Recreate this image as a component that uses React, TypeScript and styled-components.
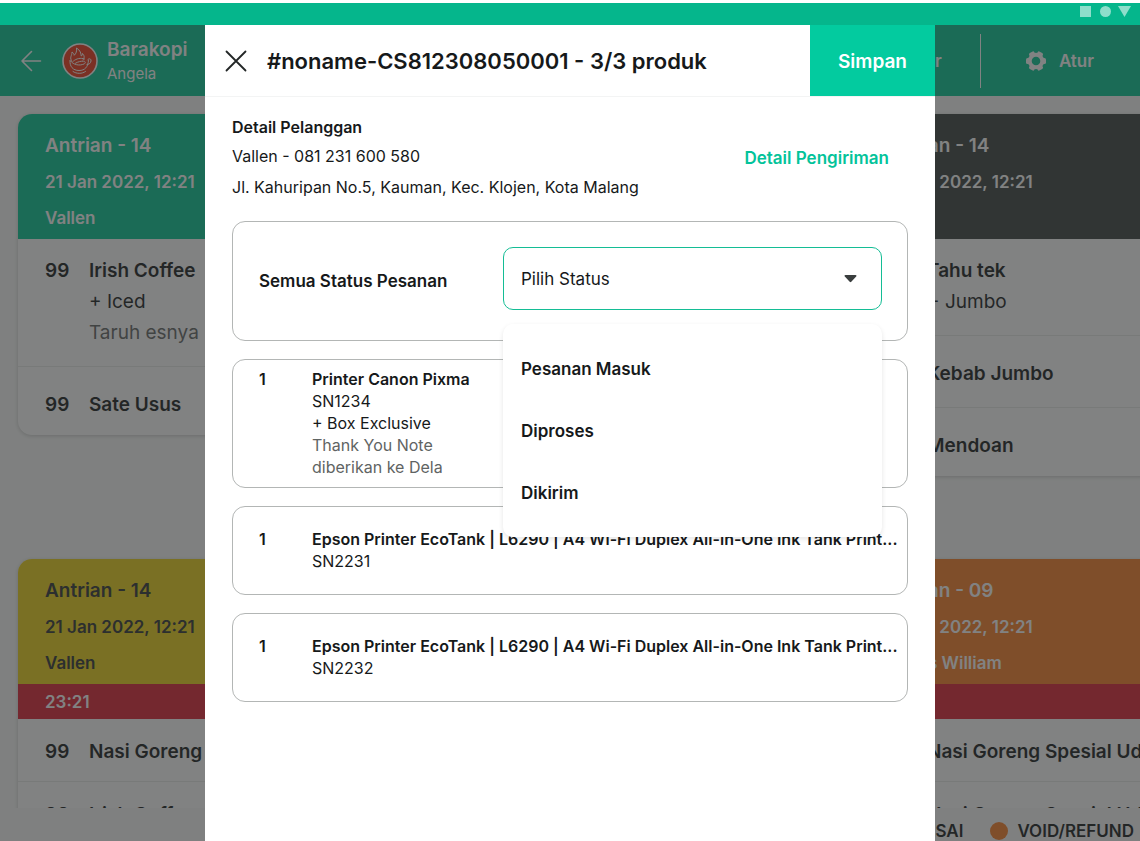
import React from "react";
import styled, { createGlobalStyle } from "styled-components";

const GlobalStyle = createGlobalStyle`
  *, *::before, *::after { box-sizing: border-box; }
  body {
    margin: 0;
    background: #ffffff;
    font-family: Inter, "Liberation Sans", sans-serif;
    color: #16191a;
  }
  button, select { font: inherit; color: inherit; }
  h1, h2, p, ul { margin: 0; padding: 0; }
  ul { list-style: none; }
`;

const Screen = styled.div`
  display: flex;
  flex-direction: column;
  height: 100vh;
  overflow: hidden;
`;

const StatusBar = styled.div`
  flex: none;
  display: flex;
  justify-content: flex-end;
  height: 25px;
  padding: 3px 9px 0 0;
  border-top: 3px solid #ffffff;
  background: #05b68c;
`;

const Workspace = styled.div`
  position: relative;
  flex: 1;
  min-height: 0;
  display: flex;
  flex-direction: column;
  background: #fafbfa;
`;

const TopBar = styled.header`
  flex: none;
  display: flex;
  align-items: center;
  height: 71px;
  padding: 0 46px 0 20px;
  background: #00c592;
  color: #ffffff;
`;

const IconButton = styled.button`
  display: flex;
  padding: 0;
  border: 0;
  background: none;
  cursor: pointer;
`;

const Brand = styled.div`
  display: flex;
  align-items: center;
  gap: 9px;
  margin-left: 20px;
`;

const BrandName = styled.p`
  font-size: 19px;
  line-height: 26px;
  font-weight: 600;
`;

const BrandUser = styled.p`
  font-size: 15px;
  line-height: 22px;
`;

const TopActions = styled.div`
  display: flex;
  align-items: center;
  margin-left: auto;
`;

const TopAction = styled.button`
  display: flex;
  align-items: center;
  gap: 12px;
  padding: 0;
  border: 0;
  background: none;
  font-size: 17px;
  line-height: 24px;
  font-weight: 600;
  cursor: pointer;
`;

const Divider = styled.span`
  width: 1px;
  height: 54px;
  margin: 0 44px 0 38px;
  background: #ffffff;
`;

const Board = styled.main`
  flex: 1;
  min-height: 0;
  display: grid;
  grid-template-columns: repeat(3, 401px);
  grid-auto-rows: 427px;
  gap: 18px;
  align-items: start;
  padding: 18px 18px 0;
  overflow: hidden;
`;

const Ticket = styled.article<{ $column: number; $row: number }>`
  grid-column: ${(p) => p.$column};
  grid-row: ${(p) => p.$row};
  border-radius: 14px;
  overflow: hidden;
  background: #ffffff;
  box-shadow: 0 1px 4px rgba(0, 0, 0, 0.2);
`;

const TicketHead = styled.div<{ $bg: string; $fg: string }>`
  min-height: 125px;
  padding: 14px 27px 0;
  background: ${(p) => p.$bg};
  color: ${(p) => p.$fg};
  font-size: 17px;
  line-height: 36px;
  font-weight: 600;
`;

const TicketTitle = styled.h2`
  font-size: 19px;
  line-height: 36px;
  font-weight: 600;
`;

const Timer = styled.div`
  height: 35px;
  padding: 0 27px;
  background: #de1e30;
  color: #ffffff;
  font-size: 17px;
  line-height: 36px;
  font-weight: 600;
`;

const OrderList = styled.ul<{ $dense?: boolean }>`
  padding: ${(p) => (p.$dense ? "0" : "0 0 15px")};

  li {
    padding: ${(p) => (p.$dense ? "17px 27px 14px" : "16px 27px 18px")};
  }
  li + li {
    padding-top: ${(p) => (p.$dense ? "17px" : "22px")};
    border-top: 1px solid #e8eae9;
  }
  li:last-child {
    padding-bottom: 0;
  }
`;

const OrderItem = styled.li`
  display: grid;
  grid-template-columns: 44px 1fr;
  font-size: 19px;
  line-height: 31px;
  white-space: nowrap;
`;

const Strong = styled.p`
  font-weight: 600;
`;

const Muted = styled.p`
  color: #5f6463;
`;

const Legend = styled.footer`
  flex: none;
  display: flex;
  justify-content: flex-end;
  gap: 27px;
  padding: 13px 6px 0 0;
  font-size: 17px;
  line-height: 20px;
  font-weight: 600;
`;

const LegendItem = styled.span<{ $color: string }>`
  display: flex;
  align-items: center;
  gap: 9px;

  &::before {
    content: "";
    width: 18px;
    height: 18px;
    border-radius: 50%;
    background: ${(p) => p.$color};
  }
`;

const Scrim = styled.div`
  position: absolute;
  inset: 0;
  display: flex;
  justify-content: center;
  background: rgba(45, 47, 46, 0.6);
`;

const Dialog = styled.section`
  width: 730px;
  max-width: 100%;
  background: #ffffff;
`;

const DialogHead = styled.div`
  display: flex;
  align-items: center;
  gap: 20px;
  height: 71px;
  padding-left: 20px;
  box-shadow: 0 1px 0 #f3f4f4;
`;

const DialogTitle = styled.h1`
  flex: 1;
  font-size: 22px;
  line-height: 30px;
  font-weight: 600;
`;

const SaveButton = styled.button`
  align-self: stretch;
  width: 125px;
  padding: 1px 0 0;
  border: 0;
  background: #03cb9f;
  color: #ffffff;
  font-size: 19px;
  font-weight: 600;
  cursor: pointer;
`;

const DialogBody = styled.div`
  display: flex;
  flex-direction: column;
  gap: 18px;
  padding: 17px 27px;
`;

const Customer = styled.div`
  display: flex;
  align-items: center;
  justify-content: space-between;
  padding-right: 19px;
  font-size: 16px;
  line-height: 31px;
`;

const CustomerHeading = styled.h2`
  font-size: 16px;
  line-height: 28px;
  font-weight: 600;
`;

const ShippingButton = styled.button`
  padding: 0;
  border: 0;
  background: none;
  color: #03c39a;
  font-size: 17px;
  line-height: 24px;
  font-weight: 600;
  cursor: pointer;
`;

const Panel = styled.div`
  display: flex;
  border: 1px solid #b3b6b5;
  border-radius: 13px;
`;

const StatusPanel = styled(Panel)`
  align-items: flex-start;
  justify-content: space-between;
  height: 120px;
  padding: 25px 25px 0 26px;
`;

const StatusLabel = styled.label`
  font-size: 17px;
  line-height: 68px;
  font-weight: 600;
`;

const SelectWrap = styled.div`
  position: relative;
  width: 379px;
`;

const StatusSelect = styled.select`
  display: block;
  width: 100%;
  height: 63px;
  padding: 0 17px;
  border: 1px solid #14bd95;
  border-radius: 10px;
  background: #ffffff;
  appearance: none;
  font-size: 17px;
  outline: none;
`;

const Caret = styled.svg`
  position: absolute;
  top: 28px;
  right: 25px;
  pointer-events: none;
`;

const Menu = styled.ul`
  position: absolute;
  z-index: 1;
  top: calc(100% + 14px);
  left: 0;
  right: 0;
  padding: 13px 0 14px;
  border-radius: 10px;
  background: #ffffff;
  box-shadow: 0 2px 5px rgba(0, 0, 0, 0.1);
`;

const MenuOption = styled.button`
  display: block;
  width: 100%;
  height: 62px;
  padding: 1px 18px 0;
  border: 0;
  background: none;
  text-align: left;
  font-size: 17px;
  font-weight: 600;
  cursor: pointer;
`;

const Product = styled(Panel)`
  align-items: center;
  min-height: 89px;
  padding: 8px 8px 9px 26px;
  font-size: 16px;
  line-height: 22px;
`;

const ProductQty = styled.p`
  flex: none;
  width: 53px;
  font-weight: 600;
`;

const ProductRow = styled.div`
  display: flex;
  min-width: 0;
  flex: 1;
`;

const ProductInfo = styled.div`
  min-width: 0;
`;

const ProductName = styled.h2`
  overflow: hidden;
  text-overflow: ellipsis;
  white-space: nowrap;
  font-size: 16px;
  line-height: 22px;
  font-weight: 600;
`;

const Note = styled(Muted)`
  max-width: 150px;
`;

type Line = { qty: string; name: string; extra?: string; note?: string };

const Lines = ({ items, dense }: { items: Line[]; dense?: boolean }) => (
  <OrderList $dense={dense}>
    {items.map((item, index) => (
      <OrderItem key={index}>
        <Strong>{item.qty}</Strong>
        <div>
          <Strong>{item.name}</Strong>
          {item.extra && <p>{item.extra}</p>}
          {item.note && <Muted>{item.note}</Muted>}
        </div>
      </OrderItem>
    ))}
  </OrderList>
);

const products = [
  { name: "Printer Canon Pixma", serial: "SN1234", extra: "+ Box Exclusive", note: "Thank You Note diberikan ke Dela" },
  { name: "Epson Printer EcoTank | L6290 | A4 Wi-Fi Duplex All-in-One Ink Tank Print...", serial: "SN2231" },
  { name: "Epson Printer EcoTank | L6290 | A4 Wi-Fi Duplex All-in-One Ink Tank Print...", serial: "SN2232" },
];

const statuses = ["Pesanan Masuk", "Diproses", "Dikirim"];

const Logo = () => (
  <svg width="36" height="36" viewBox="0 0 36 36" fill="none" aria-hidden="true">
    <circle cx="18" cy="18" r="17" fill="#f03414" stroke="#ffffff" strokeWidth="1.6" />
    <g stroke="#ffffff" strokeWidth="1" strokeLinecap="round" strokeLinejoin="round">
      <path d="M10 18.500c-3-4 0-5.500 0-9.500 1.500 1 2 2 2.200 3.300 2-1.800 2.800-4.300 2.300-7.300 4 2.500 4.500 5.500 4.700 8 1-.3 1.300-1.500 1.300-2.500 2.300 2.500 2 4.500.5 6.500" />
      <path d="M8 17.500c-.5 6 3 10 9 10s9-3.500 9.500-10" />
      <path d="M8.500 18c3 4 9 5 13.500 3 2-1 1.500-2.800-.5-2.800-3 0-5 .3-8 2" />
      <path d="M11.500 18c3-2.500 7-3.500 11-2" />
      <path d="M25.500 17c1-2 4-1.500 3.500 1s-2 3.500-4 3.500" />
      <path d="M11 28.500c3.500 2.500 9 2.500 12.500 0" />
    </g>
  </svg>
);

const Gear = () => (
  <svg width="22" height="22" viewBox="0 0 22 22" fill="none" aria-hidden="true">
    <circle cx="11" cy="11" r="6.300" stroke="#ffffff" strokeWidth="4" />
    <g fill="#ffffff">
      {[30, 90, 150, 210, 270, 330].map((angle) => (
        <rect key={angle} x="8" y="1" width="6" height="5" rx="1.600" transform={`rotate(${angle} 11 11)`} />
      ))}
    </g>
  </svg>
);

export default function App() {
  return (
    <Screen>
      <GlobalStyle />
      <StatusBar>
        <svg width="52" height="12" viewBox="0 0 52 12" fill="#ffffff" fillOpacity="0.55" aria-hidden="true">
          <path d="M1 0h11v11H1z" />
          <circle cx="26.500" cy="5.500" r="5.500" />
          <path d="M39 0h13l-6.500 11z" />
        </svg>
      </StatusBar>
      <Workspace>
        <TopBar>
          <IconButton aria-label="Kembali">
            <svg width="22" height="22" viewBox="0 0 22 22" fill="none" stroke="#ffffff" strokeWidth="1.6" strokeLinecap="round" strokeLinejoin="round">
              <path d="M20.500 11H2M11.500 1.500 2 11l9.500 9.500" />
            </svg>
          </IconButton>
          <Brand>
            <Logo />
            <div>
              <BrandName>Barakopi</BrandName>
              <BrandUser>Angela</BrandUser>
            </div>
          </Brand>
          <TopActions>
            <TopAction>Daftar</TopAction>
            <Divider />
            <TopAction>
              <Gear />
              Atur
            </TopAction>
          </TopActions>
        </TopBar>
        <Board>
          <Ticket $column={1} $row={1}>
            <TicketHead $bg="#00c592" $fg="#ffffff">
              <TicketTitle>Antrian - 14</TicketTitle>
              <p>21 Jan 2022, 12:21</p>
              <p>Vallen</p>
            </TicketHead>
            <Lines
              items={[
                { qty: "99", name: "Irish Coffee", extra: "+ Iced", note: "Taruh esnya" },
                { qty: "99", name: "Sate Usus" },
              ]}
            />
          </Ticket>
          <Ticket $column={3} $row={1}>
            <TicketHead $bg="#373f3e" $fg="#ffffff">
              <TicketTitle>Antrian - 14</TicketTitle>
              <p>21 Jan 2022, 12:21</p>
            </TicketHead>
            <Lines
              items={[
                { qty: "99", name: "Tahu tek", extra: "+ Jumbo" },
                { qty: "99", name: "Kebab Jumbo" },
                { qty: "99", name: "Mendoan" },
              ]}
            />
          </Ticket>
          <Ticket $column={1} $row={2}>
            <TicketHead $bg="#edd214" $fg="#2c3030">
              <TicketTitle>Antrian - 14</TicketTitle>
              <p>21 Jan 2022, 12:21</p>
              <p>Vallen</p>
            </TicketHead>
            <Timer>23:21</Timer>
            <Lines
              dense
              items={[
                { qty: "99", name: "Nasi Goreng" },
                { qty: "99", name: "Irish Coffee" },
              ]}
            />
          </Ticket>
          <Ticket $column={3} $row={2}>
            <TicketHead $bg="#fa7d25" $fg="#ffffff">
              <TicketTitle>Antrian - 09</TicketTitle>
              <p>21 Jan 2022, 12:21</p>
              <p>James William</p>
            </TicketHead>
            <Timer />
            <Lines
              dense
              items={[
                { qty: "99", name: "Nasi Goreng Spesial Udang" },
                { qty: "99", name: "Nasi Goreng Spesial Udang" },
              ]}
            />
          </Ticket>
        </Board>
        <Legend>
          <LegendItem $color="#00c592">SELESAI</LegendItem>
          <LegendItem $color="#fa7d25">VOID/REFUND</LegendItem>
        </Legend>

        <Scrim>
          <Dialog role="dialog" aria-labelledby="dialog-title">
            <DialogHead>
              <IconButton aria-label="Tutup">
                <svg width="22" height="22" viewBox="0 0 22 22" fill="none" stroke="#222626" strokeWidth="1.8" strokeLinecap="round">
                  <path d="M1.500 1.500l19 19M20.500 1.500l-19 19" />
                </svg>
              </IconButton>
              <DialogTitle id="dialog-title">#noname-CS812308050001 - 3/3 produk</DialogTitle>
              <SaveButton>Simpan</SaveButton>
            </DialogHead>
            <DialogBody>
              <Customer>
                <div>
                  <CustomerHeading>Detail Pelanggan</CustomerHeading>
                  <p>Vallen - 081 231 600 580</p>
                  <p>Jl. Kahuripan No.5, Kauman, Kec. Klojen, Kota Malang</p>
                </div>
                <ShippingButton>Detail Pengiriman</ShippingButton>
              </Customer>
              <StatusPanel>
                <StatusLabel htmlFor="status">Semua Status Pesanan</StatusLabel>
                <SelectWrap>
                  <StatusSelect id="status" defaultValue="">
                    <option value="">Pilih Status</option>
                    {statuses.map((status) => (
                      <option key={status}>{status}</option>
                    ))}
                  </StatusSelect>
                  <Caret width="13" height="8" viewBox="0 0 13 8" fill="#3a3e3e" aria-hidden="true">
                    <path d="M1.500 0h10c1 0 1.300.8.700 1.500L7.300 6.800c-.5.600-1.100.6-1.600 0L.8 1.500C.200.800.500 0 1.500 0z" />
                  </Caret>
                  <Menu>
                    {statuses.map((status) => (
                      <li key={status}>
                        <MenuOption>{status}</MenuOption>
                      </li>
                    ))}
                  </Menu>
                </SelectWrap>
              </StatusPanel>
              {products.map((product) => (
                <Product key={product.serial}>
                  <ProductRow>
                    <ProductQty>1</ProductQty>
                    <ProductInfo>
                      <ProductName>{product.name}</ProductName>
                      <p>{product.serial}</p>
                      {product.extra && <p>{product.extra}</p>}
                      {product.note && <Note>{product.note}</Note>}
                    </ProductInfo>
                  </ProductRow>
                </Product>
              ))}
            </DialogBody>
          </Dialog>
        </Scrim>
      </Workspace>
    </Screen>
  );
}
